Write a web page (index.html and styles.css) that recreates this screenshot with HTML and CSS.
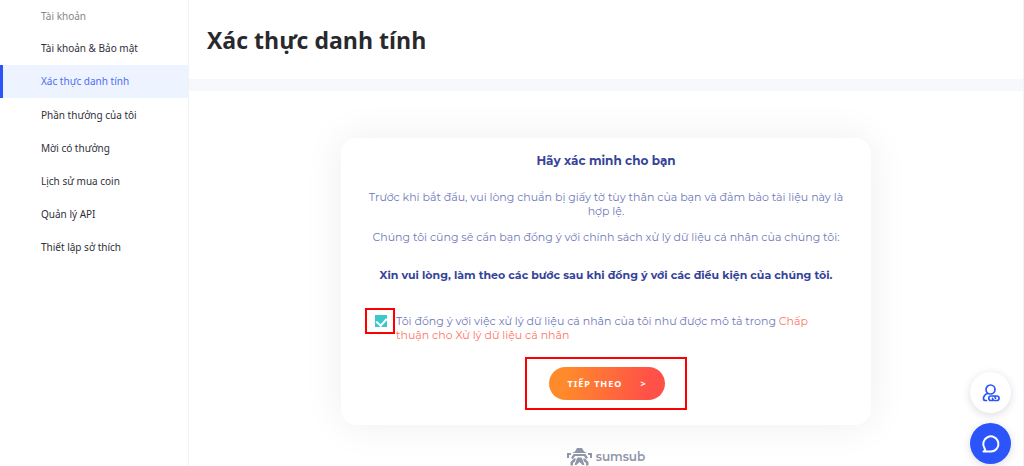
FILE: index.html
```html
<!DOCTYPE html>
<html lang="vi">
<head>
    <meta charset="UTF-8">
    <meta name="viewport" content="width=device-width, initial-scale=1.0">
    <title>Xác thực danh tính</title>
    <link rel="stylesheet" href="styles.css">
</head>
<body>
    <div class="layout">
        <nav class="sidebar">
            <p class="sidebar-title">Tài khoản</p>
            <a href="#">Tài khoản &amp; Bảo mật</a>
            <a href="#" class="active">Xác thực danh tính</a>
            <a href="#">Phần thưởng của tôi</a>
            <a href="#">Mời có thưởng</a>
            <a href="#">Lịch sử mua coin</a>
            <a href="#">Quản lý API</a>
            <a href="#">Thiết lập sở thích</a>
        </nav>

        <main class="content">
            <header class="page-header">
                <h1>Xác thực danh tính</h1>
            </header>

            <form class="card">
                <h2>Hãy xác minh cho bạn</h2>
                <p>Trước khi bắt đầu, vui lòng chuẩn bị giấy tờ tùy thân của bạn và đảm bảo tài liệu này là hợp lệ.</p>
                <p>Chúng tôi cũng sẽ cần bạn đồng ý với chính sách xử lý dữ liệu cá nhân của chúng tôi:</p>
                <p class="strong">Xin vui lòng, làm theo các bước sau khi đồng ý với các điều kiện của chúng tôi.</p>

                <div class="agree">
                    <span class="mark mark-check"><input type="checkbox" id="agree" checked></span>
                    <label for="agree">Tôi đồng ý với việc xử lý dữ liệu cá nhân của tôi như được mô tả trong <a href="#">Chấp thuận cho Xử lý dữ liệu cá nhân</a></label>
                </div>

                <div class="mark mark-button">
                    <button type="button"><span>TIẾP THEO</span><span>&gt;</span></button>
                </div>
            </form>

            <footer class="brand">
                <svg width="25" height="18" viewBox="0 0 25 18" fill="#8f96a8" aria-hidden="true">
                    <path d="M8 3.500 10 0h5l2 3.500 3 1.500H5z"/>
                    <path d="M0 5h4v2H2v3H0zM25 5h-4v2h2v3h2z"/>
                    <path d="M6.500 6h12l2.500 4-2 1-2-3H8l-2 3-2-1z"/>
                    <path d="M7 10.500h2l-1 3-2 1.500v2.500H3.500V14zM18 10.500h-2l1 3 2 1.500v2.500h2.500V14z"/>
                    <path d="M10.500 9.500h4l1 2 2 5.500h-2l-3-3-3 3h-2l2-5.500z"/>
                </svg>
                <span>sumsub</span>
            </footer>
        </main>
    </div>

    <div class="floating">
        <button type="button" class="round light" aria-label="Giới thiệu">
            <svg width="18" height="18" viewBox="0 0 18 18" fill="none" stroke="#2b55fb" stroke-width="1.7" stroke-linecap="round" stroke-linejoin="round">
                <circle cx="8.500" cy="5.500" r="4.500"/>
                <path d="M5.500 9.500C2.500 10.800 1.500 12.500 1.500 14.500c0 1.500.5 2 2 2h1"/>
                <path d="M10.500 16.500H9a2.200 2.200 0 0 1 0-4.500h2.500a2.200 2.200 0 0 1 2 2.200"/>
                <path d="M13 12h1.800a2.200 2.200 0 0 1 0 4.500h-2.300a2.200 2.200 0 0 1-2-2.200"/>
            </svg>
        </button>
        <button type="button" class="round blue" aria-label="Chat">
            <svg width="20" height="20" viewBox="0 0 20 20" fill="none" stroke="#fff" stroke-width="2" stroke-linecap="round" stroke-linejoin="round">
                <path d="M3.500 14.200A7.600 7.600 0 1 1 10 17.600H2.500l1.800-1.300z"/>
            </svg>
        </button>
    </div>
</body>
</html>
```

FILE: styles.css
```css
* {
    box-sizing: border-box;
}
body {
    margin: 0;
    font-family: "Noto Sans", "Open Sans", sans-serif;
    font-size: 11px;
    color: #2f2f3a;
    background-color: #fff;
}
h1, h2, p {
    margin: 0;
}
a {
    text-decoration: none;
}
.layout {
    display: flex;
    min-height: 100vh;
}

/* Sidebar */
.sidebar {
    flex: 0 0 189px;
    font-size: 10px;
    line-height: 33px;
    border-right: 1px solid #f1f2f5;
}
.sidebar-title {
    padding-left: 41px;
    line-height: 32px;
    color: #85858c;
}
.sidebar a {
    display: block;
    padding-left: 41px;
    color: inherit;
}
.sidebar .active {
    padding-left: 38px;
    margin-bottom: 1px;
    border-left: 3px solid #2b55fb;
    background-color: #edf4ff;
    color: #4d6df5;
}

/* Main column */
.content {
    flex: 1;
    border-right: 1px solid #f1f2f5;
}
.page-header {
    padding: 20px 18px 19px;
    border-bottom: 12px solid #f6f8fc;
}
h1 {
    font-family: "Open Sans", "Noto Sans", sans-serif;
    font-size: 23px;
    line-height: 40px;
    color: #29292d;
}

/* Verification card */
.card {
    max-width: 530px;
    margin: 47px auto 0;
    padding: 16px 24px 15px;
    border-radius: 16px;
    box-shadow: 0 0 40px rgba(0, 0, 0, 0.07);
    font-family: Montserrat, Inter, sans-serif;
    line-height: 14px;
    text-align: center;
    color: #6f79bb;
}
.card h2 {
    margin-bottom: 22px;
    font-size: 12px;
    line-height: 14px;
    color: #35449a;
}
.card p {
    margin-bottom: 12px;
}
.card .strong {
    margin-top: 24px;
    font-weight: 700;
    color: #35449a;
}
.agree {
    display: flex;
    margin-top: 26px;
    text-align: left;
}
.agree label {
    flex: 1;
    padding: 6px 24px 0 1px;
}
.agree a {
    color: #ff7566;
}
.agree input {
    appearance: none;
    display: grid;
    justify-content: center;
    width: 12px;
    height: 12px;
    margin: 0;
    background-color: #3cc8cb;
}
.agree input:checked::before {
    content: "";
    width: 5px;
    height: 8px;
    margin-top: 1px;
    border: solid #fff;
    border-width: 0 2px 2px 0;
    transform: rotate(42deg);
}
.mark {
    border: 2px solid #f00;
}
.mark-check {
    align-self: flex-start;
    padding: 5px 6px 5px 8px;
}
.mark-button {
    width: fit-content;
    margin: 15px auto 0;
    padding: 8px 20px 8px 22px;
}
.mark-button button {
    display: flex;
    align-items: center;
    gap: 18px;
    height: 33px;
    padding: 0 18px;
    border: none;
    border-radius: 17px;
    background: linear-gradient(100deg, #ff8a2b 15%, #ff5148 85%);
    color: #fff;
    font-family: "Noto Sans", sans-serif;
    font-size: 9px;
    font-weight: 700;
    letter-spacing: 1px;
    cursor: pointer;
}
.brand {
    display: flex;
    justify-content: center;
    align-items: center;
    gap: 4px;
    margin-top: 23px;
    font-family: Montserrat, Inter, sans-serif;
    font-size: 12px;
    font-weight: 600;
    line-height: 18px;
    color: #8f96a8;
}

/* Floating help buttons */
.floating {
    position: fixed;
    right: 13px;
    bottom: 2px;
    display: grid;
    gap: 10px;
}
.round {
    display: grid;
    place-items: center;
    width: 41px;
    height: 41px;
    padding: 0;
    border: none;
    border-radius: 50%;
    box-shadow: 0 2px 8px rgba(30, 40, 90, 0.16);
    cursor: pointer;
}
.light {
    background-color: #fff;
}
.blue {
    background-color: #2b55fb;
}
```
